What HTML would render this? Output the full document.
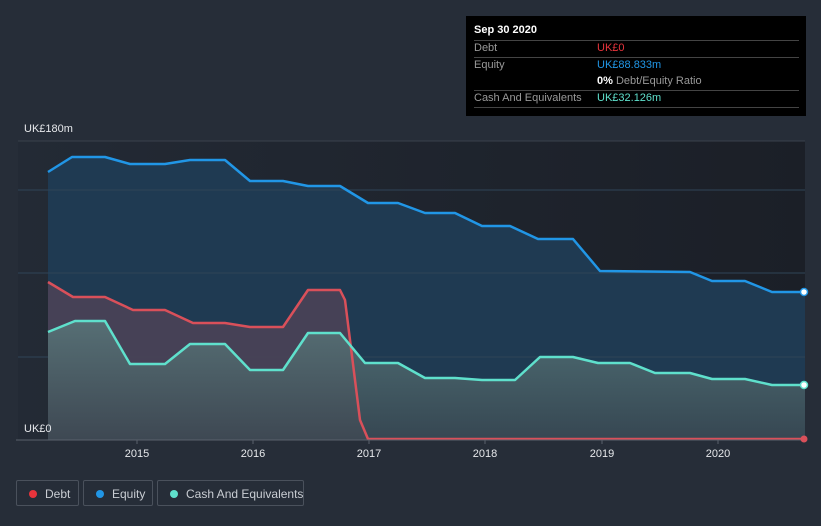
<!DOCTYPE html>
<html><head><meta charset="utf-8"><style>
html,body{margin:0;width:821px;height:526px;overflow:hidden}
body{background:#262d38;font-family:"Liberation Sans",sans-serif;position:relative}
.tip{position:absolute;left:466px;top:16px;width:340px;height:100px;background:#000;color:#fff;font-size:11px}
.tip .r{position:absolute;left:8px;width:325px;border-top:1px solid #444}
.tip span{position:absolute;white-space:nowrap}
.lg{position:absolute;top:480px;height:26px;border:1px solid #4a515c;border-radius:2px;color:#c9cdd3;font-size:12px;line-height:26px;box-sizing:border-box;white-space:nowrap}
.lg i{position:absolute;top:9px;width:8px;height:8px;border-radius:50%}
.lg b{font-weight:normal;position:absolute}
</style></head><body>
<svg width="821" height="526" style="position:absolute;left:0;top:0">
<defs>
<linearGradient id="pg" x1="0" y1="0" x2="1" y2="0"><stop offset="0" stop-color="#232a35"/><stop offset="1" stop-color="#1b1f27"/></linearGradient>
<linearGradient id="cg" x1="0" y1="0" x2="0" y2="1"><stop offset="0" stop-color="#5a7a7c"/><stop offset="1" stop-color="#3c4a52"/></linearGradient>
</defs>
<rect x="18" y="141" width="787" height="299" fill="url(#pg)"/>
<line x1="18" y1="141" x2="805" y2="141" stroke="#3a414c"/>
<path d="M48,172 L72,157 105,157 130,164 165,164 190,160 225,160 250,181 283,181 308,186 340,186 368,203 398,203 425,213 455,213 482,226 510,226 538,239 573,239 600,271 690,272 712,281 745,281 772,292 805,292 L805,440 48,440Z" fill="#1f3a52"/>
<g stroke="#2f4457" stroke-width="1"><line x1="18" y1="190" x2="805" y2="190"/><line x1="18" y1="273" x2="805" y2="273"/><line x1="18" y1="357" x2="805" y2="357"/></g>
<path d="M48,282 L73,297 105,297 133,310 165,310 193,323 225,323 250,327 283,327 308,290 340,290 345,300 360,420 368,439 L368,440 48,440Z" fill="#4a4356" opacity="0.9"/>
<path d="M48,332 L75,321 105,321 130,364 165,364 190,344 225,344 250,370 283,370 308,333 340,333 365,363 398,363 425,378 455,378 482,380 515,380 540,357 573,357 598,363 630,363 655,373 690,373 712,379 745,379 772,385 805,385 L805,440 48,440Z" fill="url(#cg)" opacity="0.8"/>
<path d="M48,172 L72,157 105,157 130,164 165,164 190,160 225,160 250,181 283,181 308,186 340,186 368,203 398,203 425,213 455,213 482,226 510,226 538,239 573,239 600,271 690,272 712,281 745,281 772,292 805,292" fill="none" stroke="#2196e6" stroke-width="2.5" stroke-linejoin="round"/>
<path d="M48,282 L73,297 105,297 133,310 165,310 193,323 225,323 250,327 283,327 308,290 340,290 345,300 360,420 368,439 805,439" fill="none" stroke="#d9505a" stroke-width="2.5" stroke-linejoin="round"/>
<path d="M48,332 L75,321 105,321 130,364 165,364 190,344 225,344 250,370 283,370 308,333 340,333 365,363 398,363 425,378 455,378 482,380 515,380 540,357 573,357 598,363 630,363 655,373 690,373 712,379 745,379 772,385 805,385" fill="none" stroke="#5fe0cc" stroke-width="2.5" stroke-linejoin="round"/>
<line x1="16" y1="440" x2="805" y2="440" stroke="#5a616c"/>
<g stroke="#5a616c"><line x1="137" y1="440" x2="137" y2="444"/><line x1="253" y1="440" x2="253" y2="444"/><line x1="369" y1="440" x2="369" y2="444"/><line x1="485" y1="440" x2="485" y2="444"/><line x1="602" y1="440" x2="602" y2="444"/><line x1="718" y1="440" x2="718" y2="444"/></g>
<circle cx="804" cy="292" r="3.5" fill="#fff" stroke="#2196e6" stroke-width="1.5"/>
<circle cx="804" cy="385" r="3.5" fill="#fff" stroke="#5fe0cc" stroke-width="1.5"/>
<circle cx="804" cy="439" r="3.5" fill="#d9505a"/>
<g fill="#e6e8eb" font-size="11" text-anchor="middle"><text x="137" y="457">2015</text><text x="253" y="457">2016</text><text x="369" y="457">2017</text><text x="485" y="457">2018</text><text x="602" y="457">2019</text><text x="718" y="457">2020</text></g>
<text x="24" y="132" fill="#e6e8eb" font-size="11">UK£180m</text>
<text x="24" y="432" fill="#e6e8eb" font-size="11">UK£0</text>
</svg>
<div class="tip">
<span style="left:8px;top:8px;font-weight:bold">Sep 30 2020</span>
<div class="r" style="top:24px"></div>
<span style="left:8px;top:26px;color:#999">Debt</span><span style="left:131px;top:26px;color:#e8343c">UK£0</span>
<div class="r" style="top:41px"></div>
<span style="left:8px;top:43px;color:#999">Equity</span><span style="left:131px;top:43px;color:#2196e6">UK£88.833m</span>
<span style="left:131px;top:59px;color:#999"><b style="color:#fff">0%</b> Debt/Equity Ratio</span>
<div class="r" style="top:74px"></div>
<span style="left:8px;top:76px;color:#999">Cash And Equivalents</span><span style="left:131px;top:76px;color:#5fe0cc">UK£32.126m</span>
<div class="r" style="top:91px"></div>
</div>
<div class="lg" style="left:16px;width:63px"><i style="background:#e8343c;left:12px"></i><b style="left:28px">Debt</b></div>
<div class="lg" style="left:83px;width:70px"><i style="background:#2196e6;left:12px"></i><b style="left:28px">Equity</b></div>
<div class="lg" style="left:157px;width:147px"><i style="background:#5fe0cc;left:12px"></i><b style="left:28px">Cash And Equivalents</b></div>
</body></html>
